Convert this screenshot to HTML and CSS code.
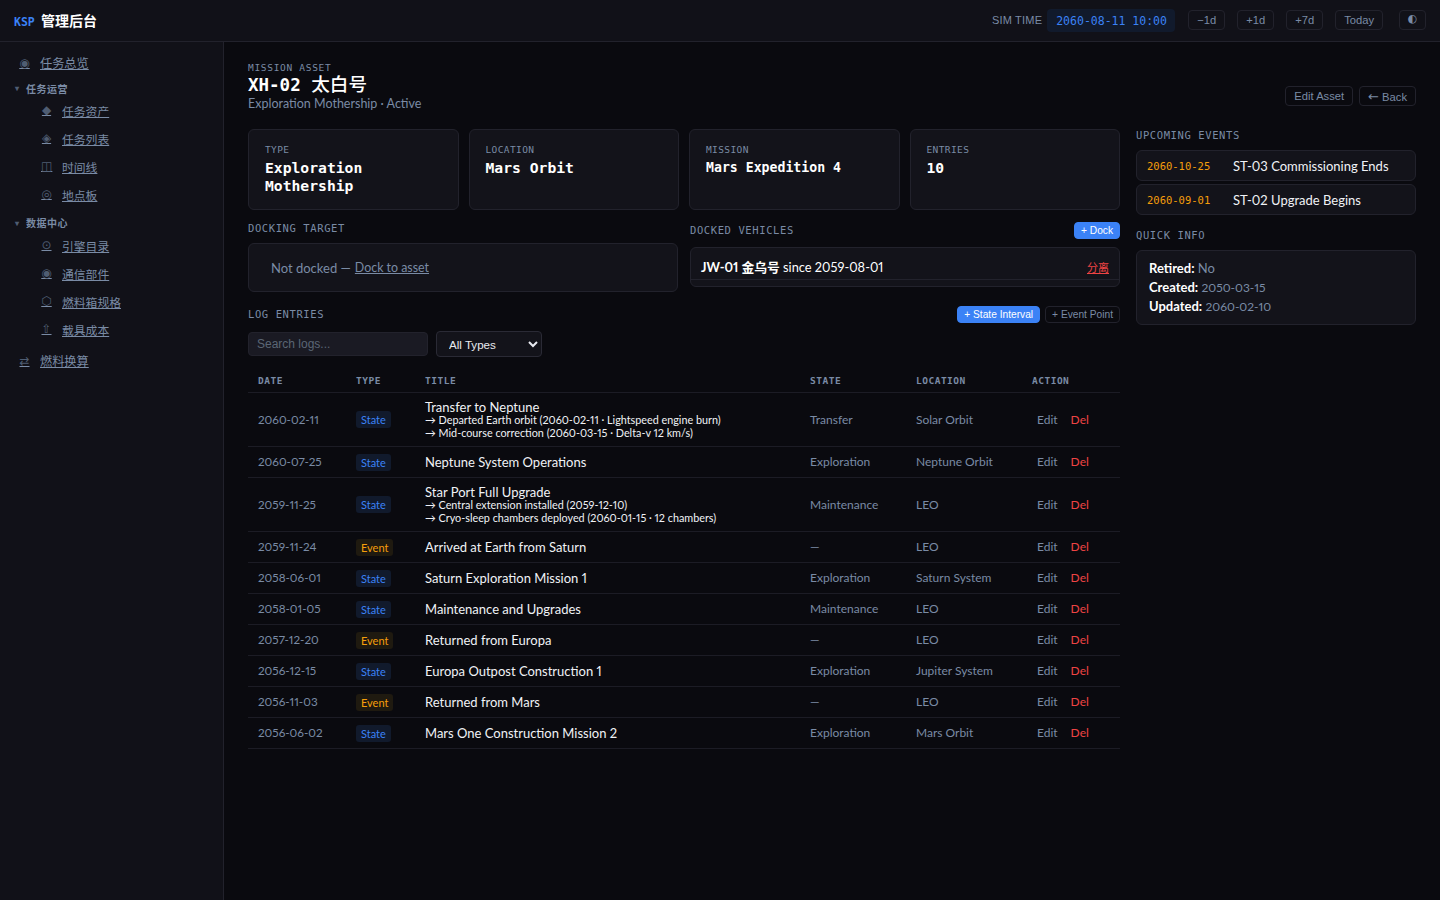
FILE: index.html
```html
<!DOCTYPE html>
<html lang="zh-Hans">
<head>
  <meta charset="UTF-8" />
  <title>XH-02 太白号 | KSP 管理后台</title>
  <link rel="stylesheet" href="styles.css">
</head>
<body>
  <header class="topbar">
    <div class="brand"><span class="brand-mark">KSP</span> 管理后台</div>
    <div class="sim">
      <span class="sim-label">SIM TIME</span>
      <span class="sim-clock">2060-08-11 10:00</span>
      <button class="btn">−1d</button>
      <button class="btn">+1d</button>
      <button class="btn">+7d</button>
      <button class="btn">Today</button>
      <button class="btn theme">◐</button>
    </div>
  </header>

  <div class="shell">
    <nav class="sidebar">
      <a class="nav-link" href="#"><span>◉</span><span>任务总览</span></a>
      <div class="nav-group"><span class="caret">▾</span>任务运营</div>
      <a class="nav-link sub" href="#"><span>◆</span><span>任务资产</span></a>
      <a class="nav-link sub" href="#"><span>◈</span><span>任务列表</span></a>
      <a class="nav-link sub" href="#"><span>◫</span><span>时间线</span></a>
      <a class="nav-link sub" href="#"><span>◎</span><span>地点板</span></a>
      <div class="nav-group second"><span class="caret">▾</span>数据中心</div>
      <a class="nav-link sub" href="#"><span>⊙</span><span>引擎目录</span></a>
      <a class="nav-link sub" href="#"><span>◉</span><span>通信部件</span></a>
      <a class="nav-link sub" href="#"><span>⬡</span><span>燃料箱规格</span></a>
      <a class="nav-link sub" href="#"><span>⇧</span><span>载具成本</span></a>
      <a class="nav-link last" href="#"><span>⇄</span><span>燃料换算</span></a>
    </nav>

    <main class="main">
      <div class="page-head">
        <div>
          <div class="eyebrow">MISSION ASSET</div>
          <h1>XH-02 <span class="h1-cjk">太白号</span></h1>
          <div class="subtitle">Exploration Mothership · Active</div>
        </div>
        <div class="head-actions">
          <button class="btn">Edit Asset</button>
          <button class="btn"><span class="arrow">←</span> Back</button>
        </div>
      </div>

      <div class="layout">
        <div class="left">
          <div class="stats">
            <div class="stat"><div class="stat-label">TYPE</div><div class="stat-value">Exploration Mothership</div></div>
            <div class="stat"><div class="stat-label">LOCATION</div><div class="stat-value">Mars Orbit</div></div>
            <div class="stat"><div class="stat-label">MISSION</div><div class="stat-value small">Mars Expedition 4</div></div>
            <div class="stat"><div class="stat-label">ENTRIES</div><div class="stat-value">10</div></div>
          </div>

          <div class="dock-row">
            <section>
              <div class="section-head"><h2>DOCKING TARGET</h2></div>
              <div class="card not-docked">Not docked — <a href="#">Dock to asset</a></div>
            </section>
            <section>
              <div class="section-head tight">
                <h2>DOCKED VEHICLES</h2>
                <button class="btn primary">+ Dock</button>
              </div>
              <div class="card docked">
                <div class="docked-row">
                  <span><b>JW-01 金乌号</b> since 2059-08-01</span>
                  <a class="detach" href="#">分离</a>
                </div>
              </div>
            </section>
          </div>

          <div class="section-head log-head">
            <h2>LOG ENTRIES</h2>
            <div class="log-actions">
              <button class="btn primary">+ State Interval</button>
              <button class="btn">+ Event Point</button>
            </div>
          </div>

          <div class="filters">
            <input class="search" type="text" placeholder="Search logs..." />
            <select class="type-select"><option>All Types</option></select>
          </div>

          <table class="logs">
            <colgroup>
              <col class="c-date" /><col class="c-type" /><col class="c-title" />
              <col class="c-state" /><col class="c-loc" /><col class="c-action" />
            </colgroup>
            <thead>
              <tr><th>DATE</th><th>TYPE</th><th>TITLE</th><th>STATE</th><th>LOCATION</th><th>ACTION</th></tr>
            </thead>
            <tbody>
              <tr>
                <td class="muted">2060-02-11</td><td><span class="tag state">State</span></td>
                <td class="title">Transfer to Neptune
                  <div class="note">→ Departed Earth orbit (2060-02-11 · Lightspeed engine burn)</div>
                  <div class="note">→ Mid-course correction (2060-03-15 · Delta-v 12 km/s)</div>
                </td>
                <td class="muted">Transfer</td><td class="muted">Solar Orbit</td>
                <td><a class="act" href="#">Edit</a><a class="act del" href="#">Del</a></td>
              </tr>
              <tr>
                <td class="muted">2060-07-25</td><td><span class="tag state">State</span></td>
                <td class="title">Neptune System Operations</td>
                <td class="muted">Exploration</td><td class="muted">Neptune Orbit</td>
                <td><a class="act" href="#">Edit</a><a class="act del" href="#">Del</a></td>
              </tr>
              <tr>
                <td class="muted">2059-11-25</td><td><span class="tag state">State</span></td>
                <td class="title">Star Port Full Upgrade
                  <div class="note">→ Central extension installed (2059-12-10)</div>
                  <div class="note">→ Cryo-sleep chambers deployed (2060-01-15 · 12 chambers)</div>
                </td>
                <td class="muted">Maintenance</td><td class="muted">LEO</td>
                <td><a class="act" href="#">Edit</a><a class="act del" href="#">Del</a></td>
              </tr>
              <tr>
                <td class="muted">2059-11-24</td><td><span class="tag event">Event</span></td>
                <td class="title">Arrived at Earth from Saturn</td>
                <td class="muted">—</td><td class="muted">LEO</td>
                <td><a class="act" href="#">Edit</a><a class="act del" href="#">Del</a></td>
              </tr>
              <tr>
                <td class="muted">2058-06-01</td><td><span class="tag state">State</span></td>
                <td class="title">Saturn Exploration Mission 1</td>
                <td class="muted">Exploration</td><td class="muted">Saturn System</td>
                <td><a class="act" href="#">Edit</a><a class="act del" href="#">Del</a></td>
              </tr>
              <tr>
                <td class="muted">2058-01-05</td><td><span class="tag state">State</span></td>
                <td class="title">Maintenance and Upgrades</td>
                <td class="muted">Maintenance</td><td class="muted">LEO</td>
                <td><a class="act" href="#">Edit</a><a class="act del" href="#">Del</a></td>
              </tr>
              <tr>
                <td class="muted">2057-12-20</td><td><span class="tag event">Event</span></td>
                <td class="title">Returned from Europa</td>
                <td class="muted">—</td><td class="muted">LEO</td>
                <td><a class="act" href="#">Edit</a><a class="act del" href="#">Del</a></td>
              </tr>
              <tr>
                <td class="muted">2056-12-15</td><td><span class="tag state">State</span></td>
                <td class="title">Europa Outpost Construction 1</td>
                <td class="muted">Exploration</td><td class="muted">Jupiter System</td>
                <td><a class="act" href="#">Edit</a><a class="act del" href="#">Del</a></td>
              </tr>
              <tr>
                <td class="muted">2056-11-03</td><td><span class="tag event">Event</span></td>
                <td class="title">Returned from Mars</td>
                <td class="muted">—</td><td class="muted">LEO</td>
                <td><a class="act" href="#">Edit</a><a class="act del" href="#">Del</a></td>
              </tr>
              <tr>
                <td class="muted">2056-06-02</td><td><span class="tag state">State</span></td>
                <td class="title">Mars One Construction Mission 2</td>
                <td class="muted">Exploration</td><td class="muted">Mars Orbit</td>
                <td><a class="act" href="#">Edit</a><a class="act del" href="#">Del</a></td>
              </tr>
            </tbody>
          </table>
        </div>

        <aside class="right">
          <h2>UPCOMING EVENTS</h2>
          <div class="card upcoming"><span class="up-date">2060-10-25</span><span>ST-03 Commissioning Ends</span></div>
          <div class="card upcoming"><span class="up-date">2060-09-01</span><span>ST-02 Upgrade Begins</span></div>
          <h2 class="quick-title">QUICK INFO</h2>
          <div class="card quick">
            <div><b>Retired:</b> No</div>
            <div><b>Created:</b> <span class="num">2050-03-15</span></div>
            <div><b>Updated:</b> <span class="num">2060-02-10</span></div>
          </div>
        </aside>
      </div>
    </main>
  </div>
</body>
</html>
```

FILE: styles.css
```css
* {
  box-sizing: border-box;
}
body {
  margin: 0;
  height: 900px;
  overflow: hidden;
  background: #0a0a0f;
  color: #e8eaf0;
  font-family: Lato, "Noto Sans CJK SC", sans-serif;
  font-size: 12px;
  font-variant-numeric: proportional-nums;
}
h1, h2 {
  margin: 0;
}
button {
  font-family: "Liberation Sans", sans-serif;
}

/* top bar */
.topbar {
  height: 42px;
  display: flex;
  align-items: center;
  justify-content: space-between;
  padding: 0 14px 1px;
  background: #111118;
  border-bottom: 1px solid #22222c;
}
.brand {
  font-family: "Noto Sans CJK SC", sans-serif;
  font-size: 14px;
  font-weight: 700;
  color: #fff;
}
.brand-mark {
  font-family: "DejaVu Sans Mono", monospace;
  font-size: 11.5px;
  color: #3b82f6;
  margin-right: 3px;
}
.sim {
  display: flex;
  align-items: center;
}
.sim-label {
  font-family: "Liberation Sans", sans-serif;
  font-size: 11px;
  letter-spacing: 0.2px;
  color: #7a8ba5;
  margin-right: 5px;
}
.sim-clock {
  font-family: "DejaVu Sans Mono", monospace;
  font-size: 11.5px;
  white-space: nowrap;
  color: #3b82f6;
  background: #111a2c;
  border-radius: 4px;
  padding: 5px 9px 0;
  width: 128px;
  height: 23px;
  margin-right: 13px;
}
.sim .btn {
  margin-right: 12px;
}
.sim .btn.theme {
  margin: 0 0 0 4px;
  width: 27px;
  padding: 0 0 3px;
  font-family: "DejaVu Sans", sans-serif;
}
.btn {
  height: 20px;
  padding: 0 8px;
  font-size: 11.2px;
  color: #7a8ba5;
  background: transparent;
  border: 1px solid #22222c;
  border-radius: 4px;
}
.arrow {
  font-family: "DejaVu Sans", sans-serif;
  font-size: 13px;
  line-height: 1;
}
.btn.primary {
  background: #3b82f6;
  border-color: #3b82f6;
  color: #fff;
  height: 17px;
  padding: 0 6px;
  font-size: 10.2px;
}

/* sidebar */
.shell {
  display: flex;
  height: 858px;
}
.sidebar {
  width: 224px;
  flex: none;
  padding-top: 7px;
  background: #111118;
  border-right: 1px solid #22222c;
}
.nav-link {
  display: flex;
  gap: 10px;
  height: 28px;
  align-items: center;
  padding-left: 19px;
  color: #7a8ba5;
  font-size: 12.2px;
}
.nav-link span:first-child {
  width: 11px;
  text-align: center;
  font-family: "DejaVu Sans", sans-serif;
  font-size: 12px;
  color: #4f5d72;
}
.nav-link.sub {
  padding-left: 41px;
  font-size: 11.8px;
}
.nav-link.last {
  margin-top: 4px;
}
.nav-group {
  height: 16px;
  margin-top: 3px;
  display: flex;
  align-items: center;
  padding-left: 15px;
  font-size: 10px;
  font-weight: 700;
  letter-spacing: 0.5px;
  color: #7a8ba5;
}
.nav-group.second {
  height: 17px;
  margin-top: 6px;
}
.caret {
  width: 11px;
  font-size: 8px;
  color: #4f5d72;
}

/* main */
.main {
  flex: 1;
  padding: 20px 24px;
}
.page-head {
  display: flex;
  justify-content: space-between;
  align-items: flex-end;
  margin-bottom: 16px;
}
.eyebrow {
  font-family: "DejaVu Sans Mono", monospace;
  font-size: 9.5px;
  letter-spacing: 0.7px;
  color: #7a8ba5;
}
h1 {
  font-family: "DejaVu Sans Mono", "Noto Sans CJK SC", monospace;
  font-size: 17.5px;
  line-height: 23px;
  color: #fff;
  margin-bottom: -2px;
}
.h1-cjk {
  font-size: 18.6px;
  font-weight: 500;
}
.subtitle {
  font-size: 12.5px;
  line-height: 18px;
  color: #7a8ba5;
}
.head-actions {
  display: flex;
  gap: 6px;
  margin-bottom: 7px;
}
.layout {
  display: grid;
  grid-template-columns: 1fr 280px;
  gap: 16px;
}
.card {
  background: #13131a;
  border: 1px solid #22222c;
  border-radius: 6px;
}
.stats {
  display: grid;
  grid-template-columns: repeat(4, 1fr);
  gap: 10px;
  margin-bottom: 12px;
}
.stat {
  background: #13131a;
  border: 1px solid #22222c;
  border-radius: 6px;
  padding: 14px 16px;
  height: 81px;
}
.stat-label {
  font-family: "DejaVu Sans Mono", monospace;
  font-size: 9.5px;
  letter-spacing: 0.4px;
  color: #7a8ba5;
  margin-bottom: 4px;
}
.stat-value {
  font-family: "DejaVu Sans Mono", monospace;
  font-size: 14.7px;
  line-height: 18px;
  font-weight: 700;
  color: #fff;
}
.stat-value.small {
  font-size: 13.2px;
}
h2 {
  font-family: "DejaVu Sans Mono", monospace;
  font-size: 10.5px;
  font-weight: 400;
  letter-spacing: 0.6px;
  color: #7a8ba5;
}
.dock-row {
  display: grid;
  grid-template-columns: 1fr 1fr;
  gap: 12px;
  margin-bottom: 14px;
}
.section-head {
  display: flex;
  justify-content: space-between;
  align-items: center;
  height: 13px;
  margin-bottom: 8px;
}
.section-head h2 {
  margin-bottom: 2px;
}
.section-head.tight {
  height: 17px;
  margin-bottom: 8px;
}
.not-docked {
  height: 49px;
  padding: 0 22px;
  display: flex;
  align-items: center;
  gap: 4px;
  font-size: 13px;
  color: #7a8ba5;
}
.not-docked a {
  font-size: 12.4px;
  color: #7a8ba5;
}
.docked {
  height: 40px;
  font-size: 12.8px;
  color: #fff;
}
.docked-row {
  height: 32px;
  padding: 6px 10px 0;
  display: flex;
  justify-content: space-between;
  align-items: center;
  border-bottom: 1px solid #22222c;
}
.detach {
  color: #ef4444;
  font-size: 11px;
}

/* log table */
.log-head {
  height: 17px;
  margin-top: 14px;
  margin-bottom: 8px;
}
.log-actions {
  display: flex;
  gap: 5px;
}
.log-actions .btn {
  height: 17px;
  font-size: 10.2px;
  padding: 0 6px;
}
.filters {
  display: flex;
  gap: 8px;
  align-items: center;
  margin-bottom: 11px;
}
.search {
  width: 180px;
  height: 24px;
  padding: 0 8px;
  background: #1a1a23;
  border: 1px solid #22222c;
  border-radius: 4px;
  font-family: "Liberation Sans", sans-serif;
  font-size: 12px;
  color: #e8eaf0;
}
.search::placeholder {
  color: #5b6675;
}
.type-select {
  width: 106px;
  height: 26px;
  padding: 0 8px;
  background: #13131a;
  border: 1px solid #2a2a35;
  border-radius: 4px;
  font-family: "Liberation Sans", sans-serif;
  font-size: 11.6px;
  color: #e8eaf0;
}
.logs {
  width: 100%;
  table-layout: fixed;
  border-collapse: collapse;
}
.c-date { width: 98px; }
.c-type { width: 69px; }
.c-state { width: 106px; }
.c-loc { width: 116px; }
.c-action { width: 98px; }
.logs th {
  font-family: "DejaVu Sans Mono", monospace;
  font-size: 9.5px;
  font-weight: 700;
  letter-spacing: 0.5px;
  text-align: left;
  color: #7a8ba5;
  padding: 1px 10px 0;
  height: 24px;
  border-bottom: 1px solid #1c1c25;
}
.logs td {
  padding: 0 10px;
  height: 31px;
  border-bottom: 1px solid #1c1c25;
  font-size: 12px;
  line-height: 13px;
}
.logs td.muted {
  color: #7a8ba5;
  font-size: 12px;
}
.logs td.muted:first-child {
  font-size: 11.7px;
}
.logs td.title {
  color: #f0f2f6;
  font-size: 13px;
  padding-top: 8px;
  padding-bottom: 7px;
}
.note {
  font-size: 10.8px;
}
.note:first-of-type {
  margin-top: -1px;
}
.tag {
  display: inline-block;
  padding: 1px 5px;
  height: 17px;
  margin-top: 1px;
  line-height: 15px;
  border-radius: 3px;
  font-size: 11px;
}
.tag.state {
  color: #3b82f6;
  background: #111a2c;
}
.tag.event {
  color: #f59e0b;
  background: #1f1a10;
}
.act {
  color: #7a8ba5;
  text-decoration: none;
  margin-left: 5px;
  margin-right: 8px;
}
.act.del {
  color: #ef4444;
}

/* right column */
.right h2 {
  margin: 0 0 9px;
}
.right .quick-title {
  margin: 14px 0 9px;
}
.upcoming {
  display: flex;
  align-items: center;
  height: 31px;
  padding: 0 10px;
  margin-bottom: 3px;
  font-size: 13px;
  color: #f0f2f6;
}
.up-date {
  font-family: "DejaVu Sans Mono", monospace;
  font-size: 10.5px;
  color: #f59e0b;
  width: 86px;
}
.quick {
  padding: 8px 12px;
  font-size: 13px;
  line-height: 19px;
  color: #7a8ba5;
}
.quick b {
  color: #fff;
}
.num {
  font-size: 12px;
}
```
